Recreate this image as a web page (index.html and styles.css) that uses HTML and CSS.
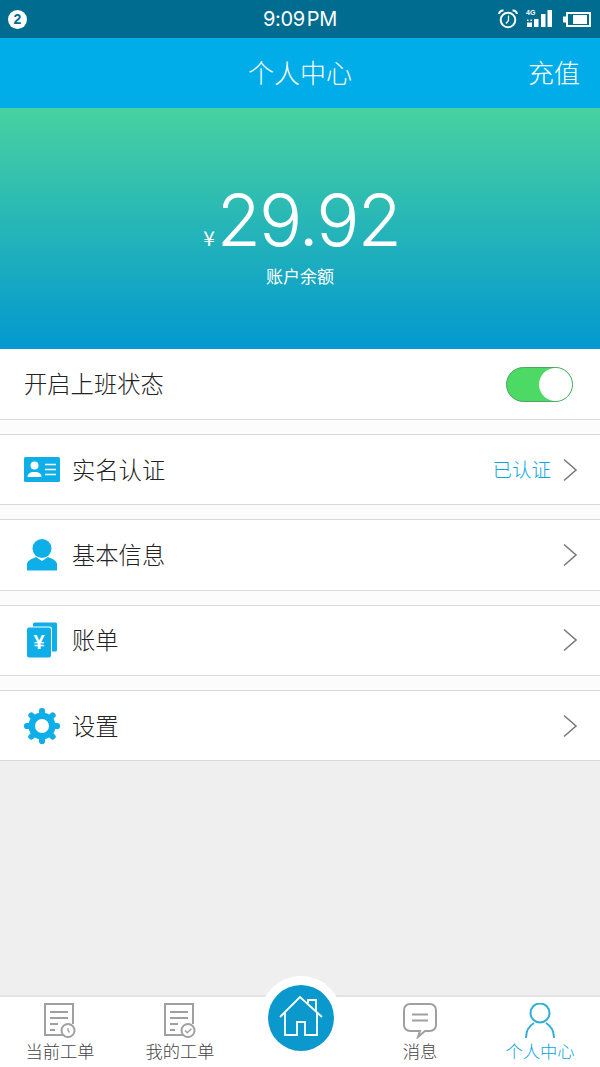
FILE: index.html
```html
<!DOCTYPE html>
<html lang="zh-CN">
<head>
<meta charset="utf-8">
<title>个人中心</title>
<link rel="stylesheet" href="styles.css">
</head>
<body>
<div class="app">
  <div class="statusbar">
    <span class="badge">2</span>
    <span class="clock">9:09<span class="ampm">PM</span></span>
    <span class="status-icons">
      <svg width="22" height="22" viewBox="0 0 22 22" fill="none" stroke="#fff"><circle cx="11" cy="12" r="7.300" stroke-width="2"/><path d="M11.500 7.500V12.500L9 15.500" stroke-width="1.300"/><path d="M2 6A4 4 0 0 1 6.500 2.500M20 6A4 4 0 0 0 15.500 2.500" stroke-width="2"/></svg>
      <span class="signal">
        <span class="net">4G</span>
        <svg width="28" height="18" viewBox="0 0 28 18" fill="#fff"><rect x="2" y="13.500" width="5" height="4.500"/><rect x="9" y="10" width="4.500" height="8"/><rect x="16" y="5" width="4.500" height="13"/><rect x="22.500" y="1" width="4.500" height="17"/><rect x="2" y="10.500" width="1.500" height="1.500"/><rect x="5.500" y="10.500" width="1.500" height="1.500"/></svg>
      </span>
      <svg class="battery" width="28" height="15" viewBox="0 0 28 15"><rect x="4" y="1" width="23" height="13" fill="none" stroke="#fff" stroke-width="2"/><rect x="0" y="4.500" width="3" height="6" fill="#fff"/><rect x="10" y="3" width="14" height="9" fill="#fff"/></svg>
    </span>
  </div>

  <header class="navbar">
    <h1 class="nav-title">个人中心</h1>
    <a class="nav-action">充值</a>
  </header>

  <section class="hero">
    <div class="amount"><span class="currency">¥</span><span class="value">29.92</span></div>
    <div class="amount-label">账户余额</div>
  </section>

  <div class="list">
    <div class="group first">
      <div class="row">
        <span class="row-label">开启上班状态</span>
        <span class="switch"><span class="knob"></span></span>
      </div>
    </div>

    <div class="group">
      <div class="row">
        <svg class="row-icon" width="36" height="25" viewBox="0 0 36 25"><rect width="36" height="25" rx="1.500" fill="#0eaee8"/><circle cx="10.500" cy="8.500" r="4" fill="#fff"/><path d="M3.500 20c0-3.500 3-4.500 4.500-5h5c1.500.5 4.500 1.500 4.500 5z" fill="#fff"/><path d="M21 7.500h11M21 12.500h11M21 17.500h11" stroke="#fff" stroke-width="1.600"/></svg>
        <span class="row-label">实名认证</span>
        <span class="row-note">已认证</span>
        <svg class="chev" width="16" height="24" viewBox="0 0 16 24" fill="none"><path d="M2 1.500L14 12 2 22.500" stroke="#7a7a7a" stroke-width="1.600"/></svg>
      </div>
    </div>

    <div class="group">
      <div class="row">
        <svg class="row-icon" width="36" height="32" viewBox="0 0 36 32"><circle cx="18" cy="9.500" r="9.500" fill="#0eaee8"/><path d="M3 31.500v-6c0-3.500 3-5 9-7.500l6 4 6-4c6 2.500 9 4 9 7.500v6z" fill="#0eaee8"/></svg>
        <span class="row-label">基本信息</span>
        <svg class="chev" width="16" height="24" viewBox="0 0 16 24" fill="none"><path d="M2 1.500L14 12 2 22.500" stroke="#7a7a7a" stroke-width="1.600"/></svg>
      </div>
    </div>

    <div class="group">
      <div class="row">
        <svg class="row-icon" width="36" height="36" viewBox="0 0 36 36"><rect x="9" y="0.500" width="24" height="29" rx="1.500" fill="#0eaee8"/><rect x="2" y="4.500" width="26" height="32" rx="2.500" fill="#fff"/><rect x="3" y="5.500" width="24" height="30" rx="2" fill="#0eaee8"/><text class="yen-mark" x="15" y="27" text-anchor="middle">¥</text></svg>
        <span class="row-label">账单</span>
        <svg class="chev" width="16" height="24" viewBox="0 0 16 24" fill="none"><path d="M2 1.500L14 12 2 22.500" stroke="#7a7a7a" stroke-width="1.600"/></svg>
      </div>
    </div>

    <div class="group">
      <div class="row">
        <svg class="row-icon" width="36" height="36" viewBox="0 0 36 36"><g fill="#0eaee8"><circle cx="18" cy="18" r="13.500"/><rect x="15" y="0" width="6" height="36" rx="2.800"/><rect x="15" y="0" width="6" height="36" rx="2.800" transform="rotate(45 18 18)"/><rect x="15" y="0" width="6" height="36" rx="2.800" transform="rotate(90 18 18)"/><rect x="15" y="0" width="6" height="36" rx="2.800" transform="rotate(135 18 18)"/></g><circle cx="18" cy="18" r="7" fill="#fff"/></svg>
        <span class="row-label">设置</span>
        <svg class="chev" width="16" height="24" viewBox="0 0 16 24" fill="none"><path d="M2 1.500L14 12 2 22.500" stroke="#7a7a7a" stroke-width="1.600"/></svg>
      </div>
    </div>
  </div>

  <div class="spacer"></div>

  <nav class="tabbar">
    <div class="tab">
      <svg width="34" height="36" viewBox="0 0 34 36" fill="none" stroke="#a0a0a0" stroke-width="2"><path d="M20 32H2V1h28v20"/><path d="M7 9h18M7 15h18M7 21h8M7 27h5" stroke-width="1.800"/><circle cx="25" cy="27.500" r="6.500" fill="#fff"/><path d="M25 25V27.500l1.500 2" stroke-width="1.300"/></svg>
      <span>当前工单</span>
    </div>
    <div class="tab">
      <svg width="34" height="36" viewBox="0 0 34 36" fill="none" stroke="#a0a0a0" stroke-width="2"><path d="M20 32H2V1h28v20"/><path d="M7 9h18M7 15h18M7 21h8M7 27h5" stroke-width="1.800"/><circle cx="25" cy="27.500" r="6.500" fill="#fff"/><path d="M22 27.500l2.300 2.300 4-4" stroke-width="1.500"/></svg>
      <span>我的工单</span>
    </div>
    <div class="tab"></div>
    <div class="tab">
      <svg width="34" height="36" viewBox="0 0 34 36" fill="none" stroke="#a0a0a0" stroke-width="2"><path d="M7 1h20a6 6 0 0 1 6 6v15a6 6 0 0 1-6 6h-5l-7 6 2-6H7a6 6 0 0 1-6-6V7a6 6 0 0 1 6-6z"/><path d="M9 11.500h16M9 17.500h16" stroke-width="1.800"/></svg>
      <span>消息</span>
    </div>
    <div class="tab active">
      <svg width="34" height="36" viewBox="0 0 34 36" fill="none" stroke="#2fafd8" stroke-width="2"><circle cx="17" cy="10" r="9.500"/><path d="M3 35c0-8 3-12 8-15M31 35c0-8-3-12-8-15"/></svg>
      <span>个人中心</span>
    </div>
    <div class="home-halo">
      <div class="home-btn">
        <svg width="44" height="40" viewBox="0 0 44 40" fill="none" stroke="#fff" stroke-width="1.800"><path d="M1 21L21 1 43 21"/><path d="M29 7V4h8v12"/><path d="M6 17v22h12V26h8v13h12V17"/></svg>
      </div>
    </div>
  </nav>
</div>
</body>
</html>
```

FILE: styles.css
```css
* { box-sizing: border-box; }
html, body { margin: 0; padding: 0; }
body {
  font-family: "Noto Sans CJK SC", "Liberation Sans", sans-serif;
  background: #efefef;
}
.app {
  width: 600px;
  height: 1067px;
  display: flex;
  flex-direction: column;
  overflow: hidden;
}
.statusbar {
  height: 38px;
  background: #006c8f;
  color: #fff;
  position: relative;
  display: flex;
  align-items: center;
  justify-content: space-between;
  padding: 0 9px 0 8px;
  flex: none;
}
.badge {
  width: 19px;
  height: 19px;
  border-radius: 50%;
  background: #fff;
  color: #006c8f;
  font: bold 14px/19px "Liberation Sans", sans-serif;
  text-align: center;
}
.clock {
  position: absolute;
  left: 0;
  right: 0;
  text-align: center;
  font: 400 20px/38px Inter, "Liberation Sans", sans-serif;
  letter-spacing: -0.3px;
}
.ampm { margin-left: 2px; }
.status-icons {
  display: flex;
  align-items: center;
  gap: 6px;
}
.battery { margin-left: 4px; }
.signal { position: relative; display: block; height: 18px; margin-top: -2px; }
.signal svg { display: block; }
.net {
  position: absolute;
  left: 1px;
  top: 0;
  font: bold 7px/7px "Liberation Sans", sans-serif;
}
.navbar {
  height: 70px;
  background: #00ade9;
  position: relative;
  color: #fff;
  flex: none;
}
.nav-title {
  margin: 0;
  text-align: center;
  font-size: 26px;
  font-weight: 300;
  line-height: 67px;
}
.nav-action {
  position: absolute;
  right: 20px;
  top: 0;
  font-size: 26px;
  font-weight: 300;
  line-height: 67px;
}
.hero {
  height: 241px;
  background: linear-gradient(180deg, #48d2a0 0%, #0398d0 100%);
  color: #fff;
  text-align: center;
  flex: none;
  padding-top: 70px;
}
.amount {
  display: flex;
  justify-content: center;
  align-items: baseline;
  height: 84px;
  line-height: 84px;
}
.currency {
  font: 400 21px/84px "Noto Sans CJK SC", sans-serif;
  margin-right: 2px;
  margin-left: 3px;
}
.value {
  font: 300 72px/84px Inter, sans-serif;
  letter-spacing: -2px;
}
.amount-label {
  font-size: 17px;
  font-weight: 400;
  line-height: 26px;
  margin-top: 1px;
}
.list {
  flex: none;
  background: #fcfcfc;
  display: flex;
  flex-direction: column;
  gap: 14px;
}
.group {
  background: #fff;
  border-top: 1px solid #d9d9d9;
  border-bottom: 1px solid #d9d9d9;
}
.group.first { border-top: 0; }
.row {
  height: 69.330px;
  display: flex;
  align-items: center;
  padding: 0 22px 0 24px;
}
.first .row { height: 70px; }
.row-icon { flex: none; margin-right: 12px; }
.row-label {
  font-size: 23.300px;
  font-weight: 300;
  color: #222;
  flex: 1;
  padding-bottom: 2px;
}
.row-note {
  font-size: 19.500px;
  font-weight: 300;
  color: #0ba6e2;
  margin-right: 11px;
  padding-bottom: 2px;
}
.chev { flex: none; }
.switch {
  width: 67px;
  height: 35px;
  border-radius: 18px;
  background: #4cd964;
  border: 1px solid #4aa862;
  margin-right: 5px;
  position: relative;
  display: block;
}
.knob {
  position: absolute;
  right: 0;
  top: 0;
  width: 33px;
  height: 33px;
  border-radius: 50%;
  background: #fff;
}
.yen-mark {
  fill: #fff;
  font: bold 20px "Liberation Sans", sans-serif;
}
.spacer { flex: 1; min-height: 0; }
.tabbar {
  height: 72px;
  flex: none;
  background: #fff;
  border-top: 2px solid #e3e3e3;
  display: flex;
  position: relative;
}
.tab {
  width: 120px;
  display: flex;
  flex-direction: column;
  align-items: center;
  color: #444;
  font-size: 17.300px;
  font-weight: 300;
  line-height: 22px;
  padding-top: 6px;
}
.tab svg { display: block; margin-bottom: 1px; }
.tab.active { color: #0ba6e2; }
.home-halo {
  position: absolute;
  left: 260px;
  top: -21px;
  width: 82px;
  height: 82px;
  border-radius: 50%;
  background: #fff;
  display: flex;
  align-items: center;
  justify-content: center;
}
.home-btn {
  width: 66px;
  height: 66px;
  margin-top: 2px;
  border-radius: 50%;
  background: #0a98cd;
  display: flex;
  align-items: center;
  justify-content: center;
}
.home-btn svg { margin-top: -4px; }
```
